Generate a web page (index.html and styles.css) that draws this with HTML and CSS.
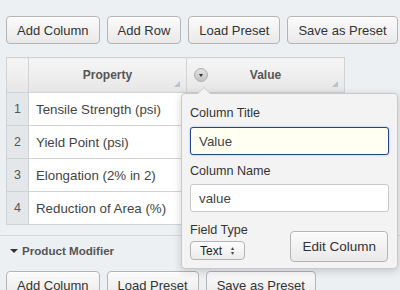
FILE: index.html
```html
<!DOCTYPE html>
<html lang="en">
<head>
    <meta charset="UTF-8" />
    <title>Spec Table Editor</title>
    <link rel="stylesheet" href="styles.css">
</head>
<body>

<div class="page">

    <div class="toolbar">
        <button class="btn">Add Column</button>
        <button class="btn">Add Row</button>
        <button class="btn">Load Preset</button>
        <button class="btn">Save as Preset</button>
    </div>

    <table class="grid">
        <thead>
            <tr>
                <th class="num"></th>
                <th>Property<span class="grip"></span></th>
                <th class="has-menu">
                    <span class="menu-toggle"></span>
                    Value<span class="grip"></span>
                </th>
            </tr>
        </thead>
        <tbody>
            <tr><td class="num">1</td><td>Tensile Strength (psi)</td><td></td></tr>
            <tr><td class="num">2</td><td>Yield Point (psi)</td><td></td></tr>
            <tr><td class="num">3</td><td>Elongation (2% in 2)</td><td></td></tr>
            <tr><td class="num">4</td><td>Reduction of Area (%)</td><td></td></tr>
        </tbody>
    </table>

    <div class="section">
        <div class="section-title"><span class="caret"></span>Product Modifier</div>
        <div class="toolbar">
            <button class="btn">Add Column</button>
            <button class="btn">Load Preset</button>
            <button class="btn">Save as Preset</button>
        </div>
    </div>

    <!-- column editor popover, anchored to the Value header -->
    <div class="popover">
        <div class="popover-body">
            <label class="field-label">Column Title</label>
            <input class="field focused" type="text" value="Value">
            <label class="field-label">Column Name</label>
            <input class="field" type="text" value="value">
            <div class="popover-foot">
                <div class="type-group">
                    <label class="field-label">Field Type</label>
                    <span class="select">Text <span class="arrows">&#x25B4;<br>&#x25BE;</span></span>
                </div>
                <button class="btn">Edit Column</button>
            </div>
        </div>
    </div>

</div>

</body>
</html>
```

FILE: styles.css
```css
body {
    margin: 0;
    background: #edf0f3;
    font-family: "Liberation Sans", Arial, sans-serif;
    color: #333;
}

.page {
    position: relative;
    width: 400px;
    height: 290px;
    overflow: hidden;
}

.toolbar {
    display: flex;
    gap: 7px;
    padding: 16px 6px 0;
}

.btn {
    flex-shrink: 0;
    height: 28px;
    padding: 0 10px;
    white-space: nowrap;
    font-family: inherit;
    font-size: 13px;
    color: #333;
    border: 1px solid #b4b4b4;
    border-radius: 4px;
    background: linear-gradient(#fbfbfb, #e9e9e9);
    box-shadow: inset 0 1px 0 #fff;
}

/* data grid */
.grid {
    margin: 13px 0 0 6px;
    border-collapse: collapse;
    table-layout: fixed;
    width: 338px;
    font-size: 13.3px;
}

.grid th,
.grid td {
    border: 1px solid #cfd3d6;
    padding: 0;
}

.grid th {
    position: relative;
    height: 34px;
    font-size: 12px;
    font-weight: bold;
    color: #555;
    background: linear-gradient(#f6f6f6, #e6e6e6);
    width: 157px;
}

.grid th.num {
    width: 21px;
}

.grid td {
    height: 32px;
    background: #fff;
    padding-left: 7px;
    color: #444;
}

.grid td.num {
    background: #e4e7ea;
    color: #555;
    text-align: center;
    padding: 0;
    font-size: 12.5px;
}

.grip {
    position: absolute;
    right: 6px;
    bottom: 5px;
    width: 6px;
    height: 6px;
    background:
        radial-gradient(circle, #b8c2cc 0.8px, transparent 1px) 0 0 / 2px 2px;
    clip-path: polygon(100% 0, 100% 100%, 0 100%);
}

.menu-toggle {
    position: absolute;
    left: 7px;
    top: 10px;
    width: 14px;
    height: 14px;
    border-radius: 50%;
    border: 1px solid #b0b0b0;
    box-sizing: border-box;
    background: linear-gradient(#e2e2e2, #c4c4c4);
}

.menu-toggle::after {
    content: "";
    position: absolute;
    left: 4px;
    top: 5px;
    border-left: 2.5px solid transparent;
    border-right: 2.5px solid transparent;
    border-top: 3px solid #333;
}

/* lower section */
.section {
    margin-top: 10px;
    border-top: 1px solid #d6dadd;
}

.section-title {
    display: flex;
    align-items: center;
    padding: 8px 0 0 10px;
    font-size: 11.6px;
    font-weight: bold;
    color: #555;
}

.caret {
    width: 0;
    height: 0;
    border-left: 4px solid transparent;
    border-right: 4px solid transparent;
    border-top: 4px solid #333;
    margin-right: 4px;
}

.section .toolbar {
    padding-top: 14px;
}

/* popover */
.popover {
    position: absolute;
    left: 181px;
    top: 93px;
    width: 217px;
    height: 176px;
    box-sizing: border-box;
    background: #f3f3f3;
    border: 1px solid #c9c9c9;
    border-radius: 4px;
    box-shadow: 0 2px 8px rgba(0, 0, 0, 0.18);
}

.popover::before,
.popover::after {
    content: "";
    position: absolute;
    left: 15px;
    top: -7px;
    border-left: 7px solid transparent;
    border-right: 7px solid transparent;
    border-bottom: 7px solid #c9c9c9;
}

.popover::after {
    top: -6px;
    border-bottom-color: #f3f3f3;
}

.popover-body {
    display: flex;
    flex-direction: column;
    padding: 12px 8px 0;
}

.field-label {
    font-size: 12.6px;
    color: #333;
    margin-bottom: 6px;
}

.field {
    height: 28px;
    box-sizing: border-box;
    margin-bottom: 9px;
    padding: 0 8px;
    font-family: inherit;
    font-size: 13.3px;
    color: #444;
    border: 1px solid #c8c8c8;
    border-radius: 3px;
    background: #fff;
}

.field.focused {
    margin-top: 1px;
    border: 1.5px solid #26448f;
    background: #fffff2;
    box-shadow: 0 0 2px rgba(40, 70, 150, 0.4);
}

.popover-foot {
    display: flex;
    justify-content: space-between;
    align-items: flex-end;
    margin-top: 2px;
}

.type-group {
    display: flex;
    flex-direction: column;
    margin-bottom: 2px;
}

.type-group .field-label {
    margin-bottom: 4px;
}

.select {
    display: flex;
    align-items: center;
    gap: 9px;
    width: 55px;
    height: 19px;
    box-sizing: border-box;
    padding-left: 9px;
    font-size: 12px;
    color: #222;
    border: 1px solid #b4b4b4;
    border-radius: 4px;
    background: linear-gradient(#fdfdfd, #ececec);
}

.arrows {
    font-size: 6px;
    line-height: 5px;
    color: #444;
}

.popover-foot .btn {
    height: 31px;
    margin-right: 1px;
    font-size: 13.5px;
    padding: 0 11px;
}
```
